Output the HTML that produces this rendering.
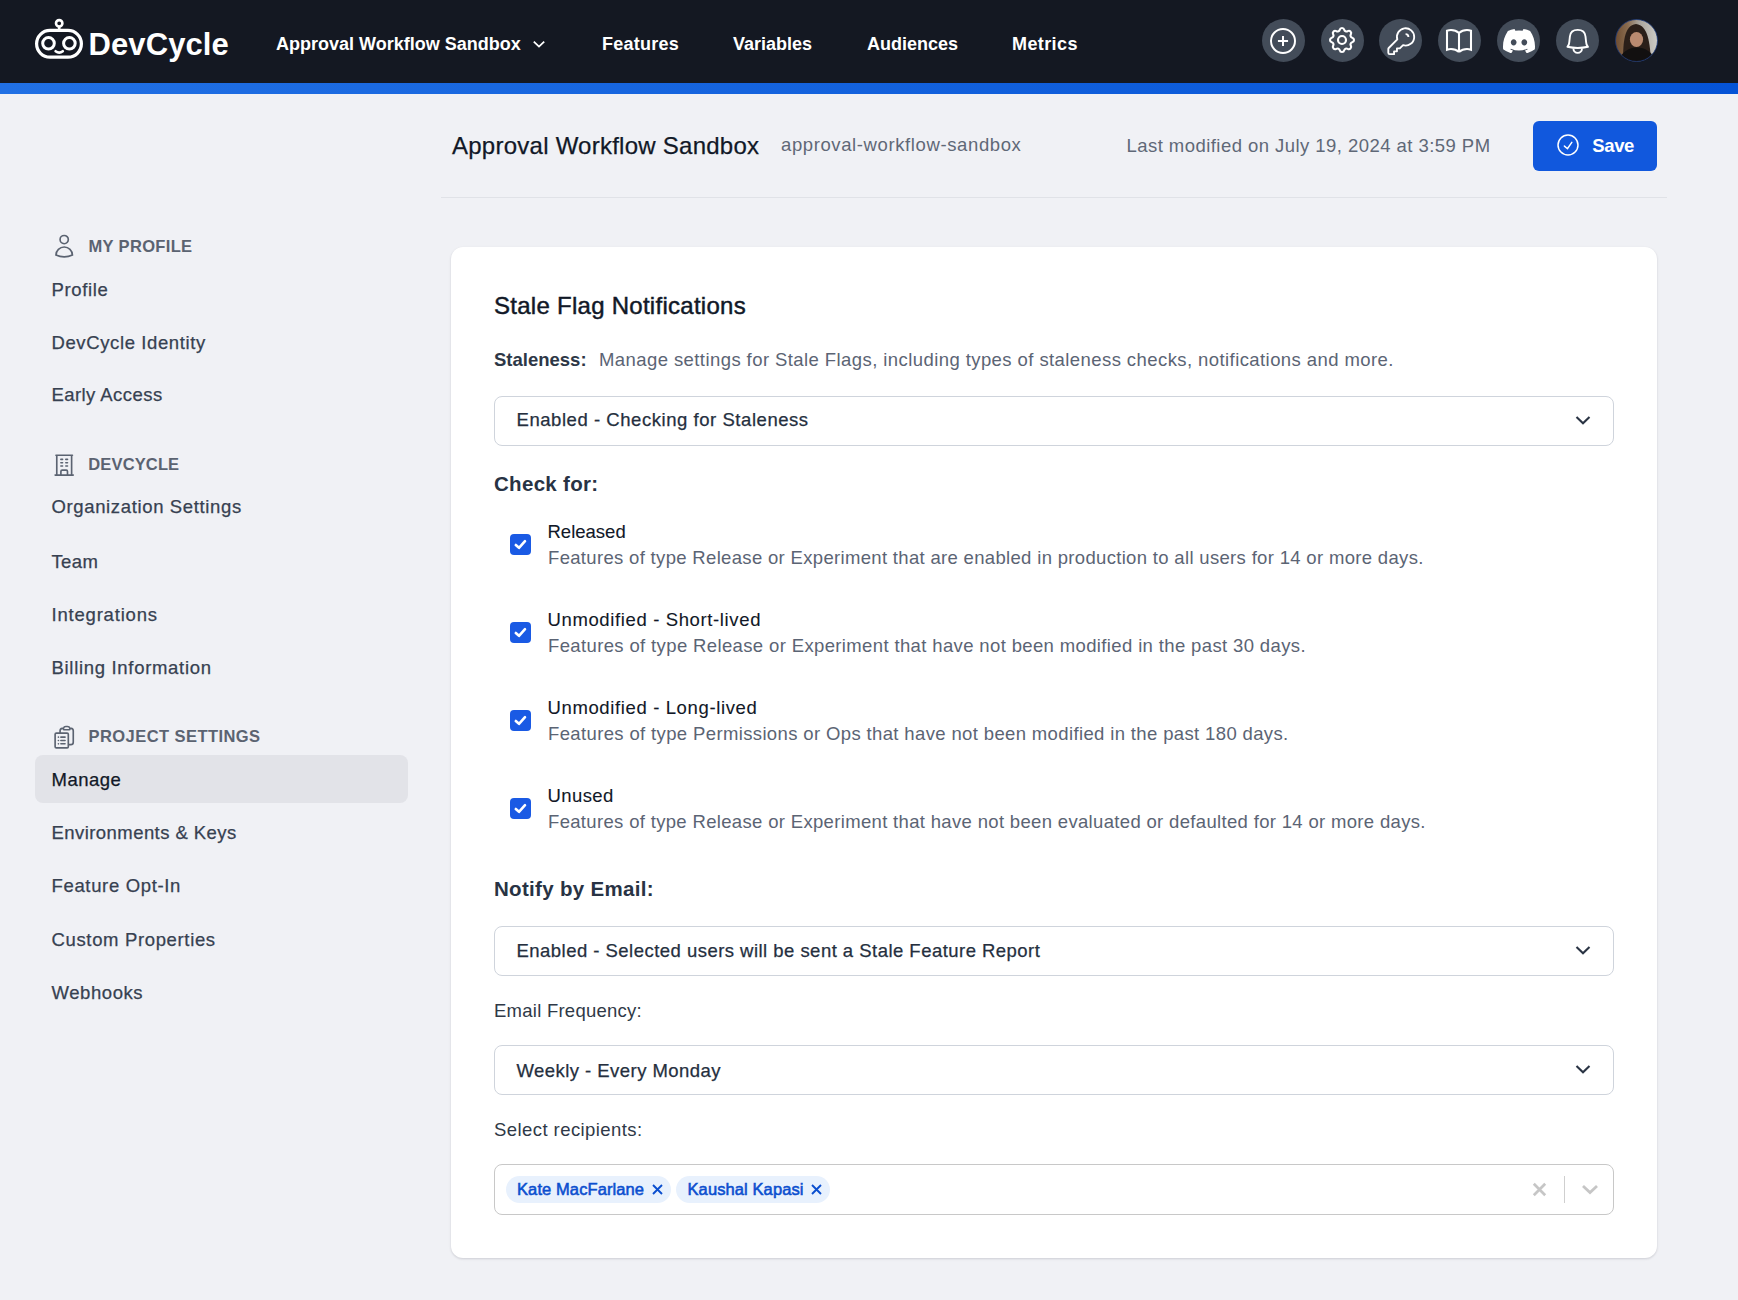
<!DOCTYPE html>
<html>
<head>
<meta charset="utf-8">
<style>
*{box-sizing:border-box;margin:0;padding:0}
html,body{width:1738px;height:1300px;overflow:hidden}
body{background:#f0f1f5;font-family:"Liberation Sans",sans-serif;position:relative}
.a{position:absolute;white-space:pre;line-height:1}
#nav{position:absolute;left:0;top:0;width:1738px;height:83px;background:#141822}
#bar{position:absolute;left:0;top:83px;width:1738px;height:11px;background:linear-gradient(90deg,#2170e4,#0553d6)}
.nl{color:#fff;font-size:18px;font-weight:700}
.ic{position:absolute;top:19px;width:43px;height:43px;border-radius:50%;background:#434c59}
.ic svg{position:absolute}
.side{font-size:18.5px;color:#374151;-webkit-text-stroke:0.25px #374151}
.sh{font-size:16.5px;font-weight:700;color:#5b6371}
.sico{position:absolute;width:26.4px;height:26.4px}
#card{position:absolute;left:451px;top:247px;width:1206px;height:1011px;background:#fff;border-radius:12px;box-shadow:0 1px 3px rgba(16,24,40,0.10),0 1px 2px rgba(16,24,40,0.06)}
.sel{position:absolute;left:494px;width:1120px;height:50px;border:1px solid #cfd4dc;border-radius:8px;background:#fff}
.selt{font-size:18.5px;color:#252f3e;letter-spacing:0.5px;-webkit-text-stroke:0.25px #252f3e}
.chev{position:absolute}
.cb{position:absolute;left:510px;width:21px;height:21px;border-radius:4px;background:#1a5ae4}
.lab{font-size:18.5px;color:#111827;-webkit-text-stroke:0.1px #111827}
.desc{font-size:18.5px;color:#5b6474;letter-spacing:0.35px}
.h2{font-size:20.5px;font-weight:700;color:#283344;letter-spacing:0.3px}
.chip{position:absolute;top:1176px;height:27px;border-radius:14px;background:#e8f1fd}
.chipt{font-size:16.5px;font-weight:400;color:#0b4fcf;-webkit-text-stroke:0.55px #0b4fcf;letter-spacing:0.1px}
</style>
</head>
<body>
<div id="nav"></div>
<div id="bar"></div>

<!-- logo -->
<svg class="a" style="left:30px;top:14px" width="60" height="50" viewBox="30 14 60 50">
  <rect x="36.6" y="30.4" width="44.8" height="26.8" rx="13.4" fill="none" stroke="#fff" stroke-width="3.2"/>
  <circle cx="48.5" cy="43.3" r="5.8" fill="none" stroke="#fff" stroke-width="3"/>
  <circle cx="69.4" cy="43.3" r="5.8" fill="none" stroke="#fff" stroke-width="3"/>
  <circle cx="59.2" cy="23.3" r="3.2" fill="none" stroke="#fff" stroke-width="2.6"/>
  <line x1="59.2" y1="26.5" x2="59.2" y2="30" stroke="#fff" stroke-width="2.6"/>
  <path d="M55.6 51.2 Q59.2 54 62.8 51.2" fill="none" stroke="#fff" stroke-width="2.6" stroke-linecap="round"/>
</svg>
<div class="a" style="left:88.5px;top:28.8px;font-size:31px;font-weight:700;color:#fff;letter-spacing:0.1px">DevCycle</div>

<div class="a nl" style="left:276px;top:34.8px">Approval Workflow Sandbox</div>
<svg class="a" style="left:532px;top:39px" width="14" height="10" viewBox="0 0 14 10"><path d="M1.8 2.6 L7 7.6 L12.2 2.6" fill="none" stroke="#fff" stroke-width="1.8"/></svg>
<div class="a nl" style="left:602px;top:35px;letter-spacing:0.25px">Features</div>
<div class="a nl" style="left:733px;top:35px">Variables</div>
<div class="a nl" style="left:867px;top:35px">Audiences</div>
<div class="a nl" style="left:1012px;top:35px;letter-spacing:0.4px">Metrics</div>

<!-- nav icons -->
<div class="ic" style="left:1262px">
  <svg style="left:5.0px;top:5.5px" width="32" height="32" viewBox="0 0 24 24" fill="none" stroke="#fff" stroke-width="1.5"><path d="M12 8.2v7.6M15.8 12H8.2M21 12a9 9 0 11-18 0 9 9 0 0118 0z"/></svg>
</div>
<div class="ic" style="left:1321px">
  <svg style="left:5.0px;top:5.2px" width="32" height="32" viewBox="0 0 24 24" fill="none" stroke="#fff" stroke-width="1.6"><path d="M10.325 4.317c.426-1.756 2.924-1.756 3.35 0a1.724 1.724 0 002.573 1.066c1.543-.94 3.31.826 2.37 2.37a1.724 1.724 0 001.065 2.572c1.756.426 1.756 2.924 0 3.35a1.724 1.724 0 00-1.066 2.573c.94 1.543-.826 3.31-2.37 2.37a1.724 1.724 0 00-2.572 1.065c-.426 1.756-2.924 1.756-3.35 0a1.724 1.724 0 00-2.573-1.066c-1.543.94-3.31-.826-2.37-2.37a1.724 1.724 0 00-1.065-2.572c-1.756-.426-1.756-2.924 0-3.35a1.724 1.724 0 001.066-2.573c-.94-1.543.826-3.31 2.37-2.37.996.608 2.296.07 2.572-1.065z"/><path d="M15 12a3 3 0 11-6 0 3 3 0 016 0z"/></svg>
</div>
<div class="ic" style="left:1379px">
  <svg style="left:5.0px;top:4.5px" width="34.5" height="34.5" viewBox="0 0 24 24" fill="none" stroke="#fff" stroke-width="1.3" stroke-linejoin="round"><path d="M15 7a2 2 0 012 2m4 0a6 6 0 01-7.743 5.743L11 17H9v2H7v2H4a1 1 0 01-1-1v-2.586a1 1 0 01.293-.707l5.964-5.964A6 6 0 1121 9z"/></svg>
</div>
<div class="ic" style="left:1438px">
  <svg style="left:5.0px;top:5.5px" width="32" height="32" viewBox="0 0 24 24" fill="none" stroke="#fff" stroke-width="1.55"><path d="M12 6.042A8.967 8.967 0 006 3.75c-1.052 0-2.062.18-3 .512v14.25A8.987 8.987 0 016 18c2.305 0 4.408.867 6 2.292m0-14.25a8.966 8.966 0 016-2.292c1.052 0 2.062.18 3 .512v14.25A8.987 8.987 0 0018 18a8.967 8.967 0 00-6 2.292m0-14.25v14.25"/></svg>
</div>
<div class="ic" style="left:1497px">
  <svg style="left:5.5px;top:10.1px" width="32" height="24.3" viewBox="0 0 127.14 96.36" fill="#fff"><path d="M107.7,8.07A105.15,105.15,0,0,0,81.47,0a72.06,72.06,0,0,0-3.36,6.83A97.68,97.68,0,0,0,49,6.83,72.37,72.37,0,0,0,45.64,0,105.89,105.89,0,0,0,19.39,8.09C2.79,32.65-1.71,56.6.54,80.21h0A105.730,105.73,0,0,0,32.71,96.36,77.7,77.7,0,0,0,39.6,85.25a68.42,68.42,0,0,1-10.850-5.18c.91-.66,1.8-1.34,2.66-2a75.57,75.57,0,0,0,64.32,0c.87.71,1.76,1.39,2.66,2a68.68,68.68,0,0,1-10.87,5.19,77,77,0,0,0,6.89,11.1A105.25,105.25,0,0,0,126.6,80.22h0C129.24,52.84,122.09,29.11,107.7,8.07ZM42.45,65.69C36.18,65.69,31,60,31,53s5-12.74,11.43-12.74S54,46,53.89,53,48.84,65.690,42.45,65.69Zm42.24,0C78.41,65.69,73.25,60,73.25,53s5-12.74,11.44-12.74S96.23,46,96.12,53,91.08,65.69,84.69,65.69Z"/></svg>
</div>
<div class="ic" style="left:1556px">
  <svg style="left:0.5px;top:0.5px" width="42" height="42" viewBox="0 0 42 42" fill="none" stroke="#fff" stroke-width="1.9" stroke-linejoin="round"><path d="M10.4 26.8 C11.8 25.3 12.3 24 12.3 22 L12.9 16.5 C13.3 12.3 16.5 9.9 20.7 9.9 C24.9 9.9 28.1 12.3 28.5 16.5 L29.1 22 C29.1 24 29.6 25.3 31 26.8 C24 28.4 17.4 28.4 10.4 26.8 Z"/><path d="M16.4 28.6 A4.3 4.3 0 0 0 25 28.6"/></svg>
</div>
<!-- avatar -->
<svg class="a" style="left:1614.5px;top:19px" width="43" height="43" viewBox="0 0 43 43">
  <defs><clipPath id="av"><circle cx="21.5" cy="21.5" r="21"/></clipPath>
  <linearGradient id="avbg" x1="0" x2="1" y1="0" y2="0"><stop offset="0" stop-color="#6e4c30"/><stop offset="0.3" stop-color="#8a6c50"/><stop offset="0.55" stop-color="#a8a39b"/><stop offset="1" stop-color="#cfcdc7"/></linearGradient></defs>
  <g clip-path="url(#av)">
    <rect width="43" height="43" fill="url(#avbg)"/>
    <path d="M8 43 C8 24 9 6 21 5 C33 6 35 24 36 43 Z" fill="#2b1f19"/>
    <ellipse cx="21.5" cy="20.5" rx="6.6" ry="7.4" fill="#b98a70"/>
    <path d="M3 43 C6 33 14 28.5 22 28.5 C30 28.5 38 33 41 43 Z" fill="#121010"/>
  </g>
  <circle cx="21.5" cy="21.5" r="21" fill="none" stroke="#1d3a7a" stroke-width="0.8"/>
</svg>

<!-- page header -->
<div class="a" style="left:452px;top:133.7px;font-size:24px;color:#111827;letter-spacing:0.25px;-webkit-text-stroke:0.25px #111827">Approval Workflow Sandbox</div>
<div class="a" style="left:781px;top:136.3px;font-size:18.5px;color:#5f6877;letter-spacing:0.61px">approval-workflow-sandbox</div>
<div class="a" style="left:1126.5px;top:136.6px;font-size:18.5px;color:#5f6877;letter-spacing:0.45px">Last modified on July 19, 2024 at 3:59 PM</div>
<div class="a" style="left:1533px;top:121px;width:124px;height:50px;border-radius:6px;background:#1158dd"></div>
<svg class="a" style="left:1556.1px;top:133.1px" width="24" height="24" viewBox="0 0 24 24" fill="none" stroke="#fff" stroke-width="1.5" stroke-linecap="round" stroke-linejoin="round"><circle cx="12" cy="12" r="10"/><path d="M8.4 13.1l3.1 2.6 4.3-6.4"/></svg>
<div class="a" style="left:1592.3px;top:136.5px;font-size:18.5px;font-weight:700;color:#fff;letter-spacing:-0.4px">Save</div>
<div class="a" style="left:441px;top:197px;width:1226px;height:1px;background:#e0e2e7"></div>

<!-- sidebar -->
<svg class="sico a" style="left:51.2px;top:233px" viewBox="0 0 24 24" fill="none" stroke="#5b6371" stroke-width="1.5" stroke-linecap="round" stroke-linejoin="round"><path d="M15.75 6a3.75 3.75 0 11-7.5 0 3.75 3.75 0 017.5 0zM4.501 20.118a7.5 7.5 0 0114.998 0A17.933 17.933 0 0112 21.75c-2.676 0-5.216-.584-7.499-1.632z"/></svg>
<div class="a sh" style="left:88.5px;top:238px;letter-spacing:0.34px">MY PROFILE</div>
<div class="a side" style="left:51.5px;top:280.7px;letter-spacing:0.64px">Profile</div>
<div class="a side" style="left:51.5px;top:333.8px;letter-spacing:0.61px">DevCycle Identity</div>
<div class="a side" style="left:51.5px;top:386.3px;letter-spacing:0.43px">Early Access</div>

<svg class="sico a" style="left:51.2px;top:451.8px" viewBox="0 0 24 24" fill="none" stroke="#5b6371" stroke-width="1.5" stroke-linecap="round" stroke-linejoin="round"><path d="M3.75 21h16.5M4.5 3h15M5.25 3v18m13.5-18v18M9 6.75h1.5m-1.5 3h1.5m-1.5 3h1.5m3-6H15m-1.5 3H15m-1.5 3H15M9 21v-3.375c0-.621.504-1.125 1.125-1.125h3.75c.621 0 1.125.504 1.125 1.125V21"/></svg>
<div class="a sh" style="left:88.3px;top:456px;letter-spacing:0.14px">DEVCYCLE</div>
<div class="a side" style="left:51.5px;top:498.4px;letter-spacing:0.64px">Organization Settings</div>
<div class="a side" style="left:51.5px;top:552.8px;letter-spacing:0.36px">Team</div>
<div class="a side" style="left:51.5px;top:605.8px;letter-spacing:0.8px">Integrations</div>
<div class="a side" style="left:51.5px;top:659.1px;letter-spacing:0.69px">Billing Information</div>

<svg class="sico a" style="left:50.8px;top:724px" viewBox="0 0 24 24" fill="none" stroke="#5b6371" stroke-width="1.5" stroke-linecap="round" stroke-linejoin="round"><path d="M9 12h3.75M9 15h3.75M9 18h3.75m3 .75H18a2.25 2.25 0 002.25-2.25V6.108c0-1.135-.845-2.098-1.976-2.192a48.424 48.424 0 00-1.123-.08m-5.801 0c-.065.21-.1.433-.1.664 0 .414.336.75.75.75h4.5a.75.75 0 00.75-.75 2.25 2.25 0 00-.1-.664m-5.8 0A2.251 2.251 0 0113.5 2.25H15c1.012 0 1.867.668 2.15 1.586m-5.8 0c-.376.023-.75.05-1.124.08C9.095 4.01 8.25 4.973 8.25 6.108V8.25m0 0H4.875c-.621 0-1.125.504-1.125 1.125v11.25c0 .621.504 1.125 1.125 1.125h9.75c.621 0 1.125-.504 1.125-1.125V9.375c0-.621-.504-1.125-1.125-1.125H8.25zM6.75 12h.008v.008H6.75V12zm0 3h.008v.008H6.75V15zm0 3h.008v.008H6.75V18z"/></svg>
<div class="a sh" style="left:88.5px;top:728px;letter-spacing:0.44px">PROJECT SETTINGS</div>
<div class="a" style="left:35px;top:755px;width:373px;height:47.5px;border-radius:8px;background:#e2e3e8"></div>
<div class="a side" style="left:51.5px;top:771.0px;letter-spacing:0.5px;color:#111827;-webkit-text-stroke-color:#111827">Manage</div>
<div class="a side" style="left:51.5px;top:823.9px;letter-spacing:0.44px">Environments &amp; Keys</div>
<div class="a side" style="left:51.5px;top:877.3px;letter-spacing:0.66px">Feature Opt-In</div>
<div class="a side" style="left:51.5px;top:930.7px;letter-spacing:0.65px">Custom Properties</div>
<div class="a side" style="left:51.5px;top:983.5px;letter-spacing:0.57px">Webhooks</div>

<!-- card -->
<div id="card"></div>
<div class="a" style="left:494px;top:293.7px;font-size:24px;color:#111827;letter-spacing:0.27px;-webkit-text-stroke:0.45px #111827">Stale Flag Notifications</div>
<div class="a" style="left:494px;top:351.4px;font-size:18.5px;font-weight:700;color:#2d3746">Staleness:</div>
<div class="a" style="left:599px;top:351.4px;font-size:18.5px;color:#5b6474;letter-spacing:0.42px">Manage settings for Stale Flags, including types of staleness checks, notifications and more.</div>

<div class="sel" style="top:396px"></div>
<div class="a selt" style="left:516.5px;top:411.2px;letter-spacing:0.55px">Enabled - Checking for Staleness</div>
<svg class="chev" style="left:1574px;top:412px" width="18" height="16" viewBox="0 0 18 16" fill="none" stroke="#2a3444" stroke-width="2.1"><path d="M2.5 5 L9 11.3 L15.5 5"/></svg>

<div class="a h2" style="left:494px;top:473.5px">Check for:</div>

<!-- checkboxes -->
<div class="cb" style="top:534px"></div>
<svg class="a" style="left:510px;top:534px" width="21" height="21" viewBox="0 0 21 21" fill="none" stroke="#fff" stroke-width="2.6" stroke-linecap="round" stroke-linejoin="round"><path d="M5.8 11 L9 13.8 L15 7.2"/></svg>
<div class="a lab" style="left:547.5px;top:523.1px">Released</div>
<div class="a desc" style="left:548px;top:549.0px;letter-spacing:0.325px">Features of type Release or Experiment that are enabled in production to all users for 14 or more days.</div>

<div class="cb" style="top:622px"></div>
<svg class="a" style="left:510px;top:622px" width="21" height="21" viewBox="0 0 21 21" fill="none" stroke="#fff" stroke-width="2.6" stroke-linecap="round" stroke-linejoin="round"><path d="M5.8 11 L9 13.8 L15 7.2"/></svg>
<div class="a lab" style="left:547.5px;top:611.1px;letter-spacing:0.63px">Unmodified - Short-lived</div>
<div class="a desc" style="left:548px;top:637.0px;letter-spacing:0.366px">Features of type Release or Experiment that have not been modified in the past 30 days.</div>

<div class="cb" style="top:710px"></div>
<svg class="a" style="left:510px;top:710px" width="21" height="21" viewBox="0 0 21 21" fill="none" stroke="#fff" stroke-width="2.6" stroke-linecap="round" stroke-linejoin="round"><path d="M5.8 11 L9 13.8 L15 7.2"/></svg>
<div class="a lab" style="left:547.5px;top:699.1px;letter-spacing:0.63px">Unmodified - Long-lived</div>
<div class="a desc" style="left:548px;top:725.0px;letter-spacing:0.365px">Features of type Permissions or Ops that have not been modified in the past 180 days.</div>

<div class="cb" style="top:798px"></div>
<svg class="a" style="left:510px;top:798px" width="21" height="21" viewBox="0 0 21 21" fill="none" stroke="#fff" stroke-width="2.6" stroke-linecap="round" stroke-linejoin="round"><path d="M5.8 11 L9 13.8 L15 7.2"/></svg>
<div class="a lab" style="left:547.5px;top:787.1px;letter-spacing:0.4px">Unused</div>
<div class="a desc" style="left:548px;top:813.0px;letter-spacing:0.332px">Features of type Release or Experiment that have not been evaluated or defaulted for 14 or more days.</div>

<div class="a h2" style="left:494px;top:879px;letter-spacing:0.31px">Notify by Email:</div>

<div class="sel" style="top:926px"></div>
<div class="a selt" style="left:516.5px;top:942px;letter-spacing:0.47px">Enabled - Selected users will be sent a Stale Feature Report</div>
<svg class="chev" style="left:1574px;top:942px" width="18" height="16" viewBox="0 0 18 16" fill="none" stroke="#2a3444" stroke-width="2.1"><path d="M2.5 5 L9 11.3 L15.5 5"/></svg>

<div class="a" style="left:494px;top:1002.1px;font-size:18.5px;color:#2f3947;letter-spacing:0.25px">Email Frequency:</div>

<div class="sel" style="top:1045px"></div>
<div class="a selt" style="left:516.5px;top:1061.5px;letter-spacing:0.45px">Weekly - Every Monday</div>
<svg class="chev" style="left:1574px;top:1061px" width="18" height="16" viewBox="0 0 18 16" fill="none" stroke="#2a3444" stroke-width="2.1"><path d="M2.5 5 L9 11.3 L15.5 5"/></svg>

<div class="a" style="left:494px;top:1120.5px;font-size:18.5px;color:#2f3947;letter-spacing:0.43px">Select recipients:</div>

<div class="a" style="left:494px;top:1164px;width:1120px;height:51px;border:1px solid #c8c8c8;border-radius:8px;background:#fff"></div>
<div class="chip" style="left:506px;width:165px"></div>
<div class="a chipt" style="left:517px;top:1181.2px">Kate MacFarlane</div>
<svg class="a" style="left:651px;top:1183px" width="13" height="13" viewBox="0 0 13 13" fill="none" stroke="#0b4fcf" stroke-width="1.9"><path d="M2 2 L11 11 M11 2 L2 11"/></svg>
<div class="chip" style="left:676px;width:154px"></div>
<div class="a chipt" style="left:687.5px;top:1181.2px">Kaushal Kapasi</div>
<svg class="a" style="left:809.5px;top:1183px" width="13" height="13" viewBox="0 0 13 13" fill="none" stroke="#0b4fcf" stroke-width="1.9"><path d="M2 2 L11 11 M11 2 L2 11"/></svg>
<svg class="a" style="left:1532px;top:1182px" width="15" height="15" viewBox="0 0 15 15" fill="none" stroke="#c6c6c6" stroke-width="2.7"><path d="M1.8 1.8 L13.2 13.2 M13.2 1.8 L1.8 13.2"/></svg>
<div class="a" style="left:1564px;top:1176px;width:1px;height:27px;background:#cfcfcf"></div>
<svg class="a" style="left:1580.5px;top:1183px" width="18" height="14" viewBox="0 0 18 14" fill="none" stroke="#c6c6c6" stroke-width="2.8"><path d="M2 3 L9 9.5 L16 3"/></svg>
</body>
</html>
